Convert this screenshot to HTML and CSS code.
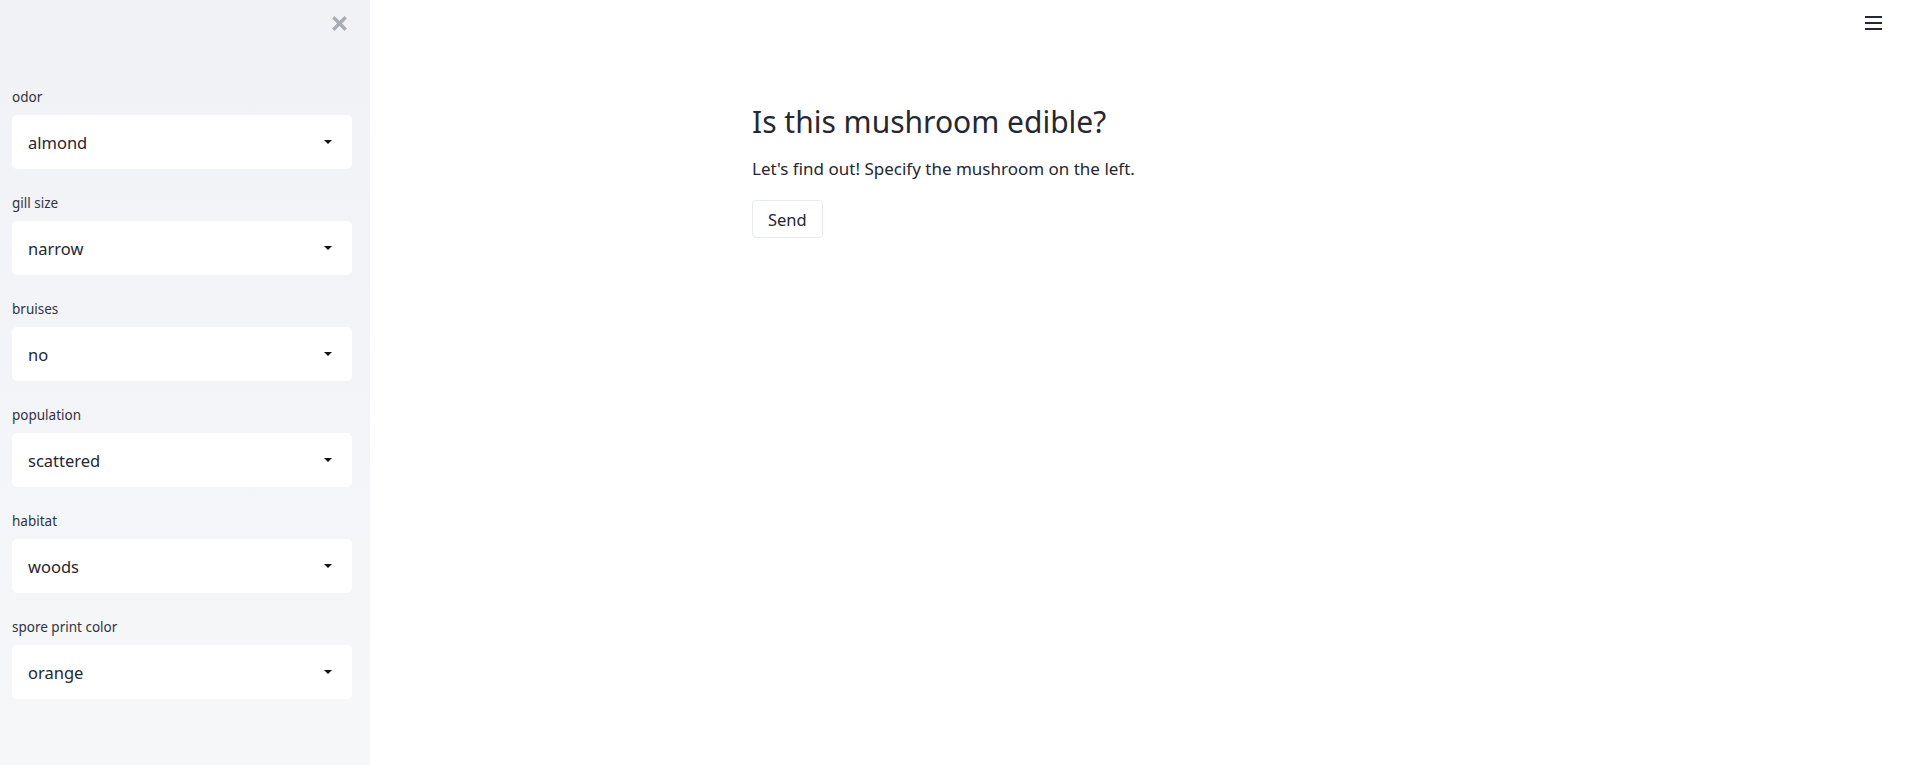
FILE: index.html
```html
<!DOCTYPE html>
<html>
<head>
<meta charset="utf-8">
<link rel="stylesheet" href="styles.css">
</head>
<body>
<div class="app">
  <aside class="sidebar">
    <div class="sidebar-top">
      <button class="close" aria-label="Close">
        <svg width="15" height="15" viewBox="0 0 15 15"><path d="M2.5 2.5 L12.5 12.5 M12.5 2.5 L2.5 12.5" stroke="#a8acb3" stroke-width="3.4" stroke-linecap="square"/></svg>
      </button>
    </div>
    <div class="widget">
      <label class="w-label">odor</label>
      <div class="select"><span>almond</span><span class="caret"></span></div>
    </div>
    <div class="widget">
      <label class="w-label">gill size</label>
      <div class="select"><span>narrow</span><span class="caret"></span></div>
    </div>
    <div class="widget">
      <label class="w-label">bruises</label>
      <div class="select"><span>no</span><span class="caret"></span></div>
    </div>
    <div class="widget">
      <label class="w-label">population</label>
      <div class="select"><span>scattered</span><span class="caret"></span></div>
    </div>
    <div class="widget">
      <label class="w-label">habitat</label>
      <div class="select"><span>woods</span><span class="caret"></span></div>
    </div>
    <div class="widget">
      <label class="w-label">spore print color</label>
      <div class="select"><span>orange</span><span class="caret"></span></div>
    </div>
  </aside>
  <main class="main">
    <div class="topbar">
      <button class="menu" aria-label="Menu">
        <svg width="17" height="14" viewBox="0 0 17 14"><rect x="0" y="0" width="17" height="2" fill="#262730"/><rect x="0" y="6" width="17" height="2" fill="#262730"/><rect x="0" y="12" width="17" height="2" fill="#262730"/></svg>
      </button>
    </div>
    <div class="block">
      <h1 class="title">Is this mushroom edible?</h1>
      <p class="lead">Let's find out! Specify the mushroom on the left.</p>
      <button class="btn">Send</button>
    </div>
  </main>
</div>
</body>
</html>
```

FILE: styles.css
```css
* { box-sizing: border-box; }
html, body { margin: 0; padding: 0; height: 100%; }
body {
  font-family: "Noto Sans", "Open Sans", sans-serif;
  color: #262730;
  background: #ffffff;
}
.app {
  display: flex;
  min-height: 765px;
}
.sidebar {
  width: 370px;
  flex: 0 0 370px;
  background: linear-gradient(180deg, #f0f2f6 0%, #f6f7f9 100%);
  padding: 0 18px 0 12px;
  display: flex;
  flex-direction: column;
}
.sidebar-top {
  height: 87px;
  display: flex;
  justify-content: flex-end;
  align-items: flex-start;
  padding-top: 16px;
}
.close {
  border: 0;
  background: transparent;
  padding: 0;
  margin-right: 5px;
  width: 15px;
  height: 15px;
  display: flex;
}
.widget {
  display: flex;
  flex-direction: column;
  margin-bottom: 24px;
}
.w-label {
  font-size: 13.5px;
  line-height: 20px;
  height: 20px;
  margin-bottom: 8px;
  color: #31333f;
}
.select {
  height: 54px;
  background: #ffffff;
  border-radius: 5px;
  display: flex;
  align-items: center;
  justify-content: space-between;
  padding: 0 20px 0 16px;
  font-size: 16.5px;
  color: #262730;
}
.caret {
  width: 0;
  height: 0;
  border-left: 4px solid transparent;
  border-right: 4px solid transparent;
  border-top: 4px solid #111;
}
.main {
  flex: 1;
  display: flex;
  flex-direction: column;
}
.topbar {
  display: flex;
  justify-content: flex-end;
  padding: 16px 23px 0 0;
  height: 100px;
}
.menu {
  border: 0;
  background: transparent;
  padding: 0;
  display: flex;
}
.block {
  padding-left: 382px;
}
.title {
  margin: 0;
  font-weight: 400;
  font-size: 30px;
  line-height: 44px;
  color: #262730;
}
.lead {
  margin: 13px 0 0;
  font-size: 17px;
  line-height: 24px;
  color: #262730;
}
.btn {
  margin-top: 19px;
  height: 38px;
  padding: 0 15px;
  font-family: inherit;
  font-size: 16.5px;
  color: #262730;
  background: #ffffff;
  border: 1px solid #e6e9ef;
  border-radius: 4px;
}
```
